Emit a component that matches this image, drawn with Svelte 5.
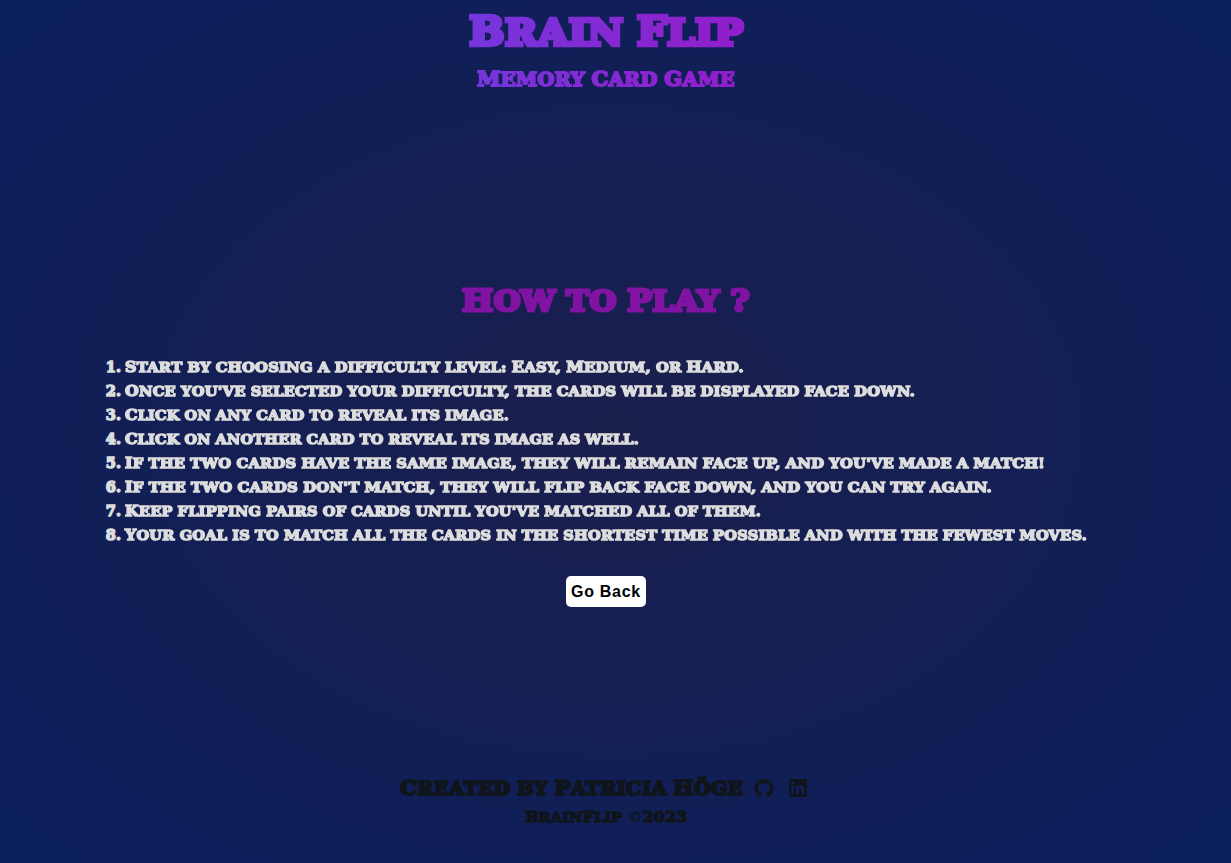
<script>
  const steps = [
    ['Start by choosing a difficulty level: Easy, Medium, or Hard.', 619],
    ["Once you've selected your difficulty, the cards will be displayed face down.", 790],
    ['Click on any card to reveal its image.', 384],
    ['Click on another card to reveal its image as well.', 514],
    ['If the two cards have the same image, they will remain face up, and you\'ve made a match!', 920],
    ["If the two cards don't match, they will flip back face down, and you can try again.", 867],
    ["Keep flipping pairs of cards until you've matched all of them.", 636],
    ['Your goal is to match all the cards in the shortest time possible and with the fewest moves.', 962]
  ];

  // Capitals keep the full size, everything else is set as slightly smaller capitals.
  const runs = (text) => text.match(/©|[A-ZÖ0-9?]+|[^A-ZÖ0-9?©]+/g);

  // Widens the letters of a line so that it fills the given width.
  function stretch(node, width) {
    const natural = node.getBoundingClientRect().width;
    node.style.transform = `scaleX(${width / natural})`;
  }
</script>

{#snippet caps(text, width)}<span class="line" style="width: {width}px"><span class="caps" use:stretch={width}>{#each runs(text) as run}<span class:small={!/^[A-ZÖ0-9?©]/.test(run)} class:thin={run === '©'}>{run}</span>{/each}</span></span>{/snippet}

<div class="page">
  <header>
    <h1>{@render caps('Brain Flip', 275)}</h1>
    <h2>{@render caps('Memory Card Game', 258)}</h2>
  </header>

  <main>
    <h3>{@render caps('How to Play ?', 288)}</h3>
    <ol>
      {#each steps as [text, width], i}
        <li><span class="number">{i + 1}.</span>{@render caps(text, width)}</li>
      {/each}
    </ol>
    <button>Go Back</button>
  </main>

  <footer>
    <div class="author">
      {@render caps('Created by Patricia Höge', 343)}
      <svg class="github" viewBox="0 0 16 16"><path d="M8 0C3.58 0 0 3.58 0 8c0 3.54 2.29 6.53 5.47 7.59.4.07.55-.17.55-.38 0-.19-.01-.82-.01-1.49-2.01.37-2.53-.49-2.69-.94-.09-.23-.48-.94-.82-1.13-.28-.15-.68-.52-.01-.53.63-.01 1.08.58 1.23.82.72 1.21 1.87.87 2.33.66.07-.52.28-.87.51-1.07-1.78-.2-3.64-.89-3.64-3.95 0-.87.31-1.59.82-2.15-.08-.2-.36-1.02.08-2.12 0 0 .67-.21 2.2.82.64-.18 1.32-.27 2-.27s1.36.09 2 .27c1.53-1.04 2.2-.82 2.2-.82.44 1.1.16 1.92.08 2.12.51.56.82 1.27.82 2.15 0 3.07-1.87 3.75-3.65 3.95.29.25.54.73.54 1.48 0 1.07-.01 1.93-.01 2.2 0 .21.15.46.55.38A8.01 8.01 0 0 0 16 8c0-4.42-3.58-8-8-8z" /></svg>
      <svg class="linkedin" viewBox="0 0 18 18"><path fill-rule="evenodd" d="M.6 0h16.8a.6.6 0 0 1 .6.6v16.8a.6.6 0 0 1-.6.6H.6a.6.6 0 0 1-.6-.6V.6A.6.6 0 0 1 .6 0zM4 2.4a1.55 1.55 0 1 0 0 3.1 1.55 1.55 0 0 0 0-3.1zM2.7 6.8v8.5h2.6V6.8zM6.9 6.8v8.5h2.7v-4.2c0-1.1.3-2.1 1.6-2.1s1.4 1.2 1.4 2.2v4.1h2.7v-4.7c0-2.3-.5-4-3.2-4-1.3 0-2.1.7-2.5 1.4V6.8z" /></svg>
    </div>
    <div class="copyright">{@render caps('BrainFlip ©2023', 162)}</div>
  </footer>
</div>

<style>
  :global(body) {
    margin: 0;
  }
  .page {
    box-sizing: border-box;
    height: 863px;
    padding-right: 19px;
    display: flex;
    flex-direction: column;
    align-items: center;
    overflow: hidden;
    color: #ddd;
    font-family: 'DejaVu Serif', serif;
    font-weight: 700;
    background: radial-gradient(ellipse at center, #1b1f4c, #0b1f5e);
  }
  header,
  main,
  footer {
    display: flex;
    flex-direction: column;
    align-items: center;
  }
  header {
    height: 270px;
  }
  h1,
  h2,
  h3 {
    margin: 0;
    font-weight: 700;
  }
  .line {
    display: inline-block;
    flex: none;
    white-space: pre;
  }
  .caps {
    display: inline-block;
    transform-origin: left;
    white-space: pre;
    text-transform: uppercase;
    letter-spacing: 0.015em;
    word-spacing: -0.02em;
    -webkit-text-stroke: 0.11em currentColor;
  }
  .small {
    font-size: 0.93em;
  }
  .thin {
    font-weight: 400;
    -webkit-text-stroke-width: 0.02em;
  }
  h1 .caps,
  h2 .caps {
    color: transparent;
    -webkit-text-stroke-color: transparent;
    background: linear-gradient(to right, #7636dc, #921dca);
    background-clip: text;
    -webkit-background-clip: text;
  }
  h1 {
    height: 63px;
    font-size: 39px;
    line-height: 62px;
  }
  h2 {
    font-size: 19.5px;
    line-height: 34px;
  }
  h2 .caps {
    -webkit-text-stroke-width: 0.1em;
  }
  h2 .small {
    font-size: 0.92em;
  }
  main {
    height: 490px;
  }
  h3 {
    margin-top: 6px;
    font-size: 29px;
    line-height: 50px;
    color: #8013a1;
  }
  ol {
    width: 984px;
    margin: 28px 26px 0 0;
    padding: 0;
    list-style: none;
    font-size: 14.5px;
    line-height: 24px;
  }
  ol .caps {
    -webkit-text-stroke-width: 0.1em;
  }
  li {
    display: flex;
    height: 24px;
  }
  .number {
    flex: none;
    width: 20px;
    margin-right: 4px;
    text-align: right;
    white-space: nowrap;
    -webkit-text-stroke: 0.1em currentColor;
  }
  button {
    width: 80px;
    height: 31px;
    margin-top: 29px;
    padding: 0;
    border: 0;
    border-radius: 5px;
    background: #fff;
    color: #000;
    font: 700 16px/31px 'Liberation Sans', Arial, sans-serif;
    letter-spacing: 0.7px;
    white-space: nowrap;
  }
  footer {
    color: #10151b;
  }
  .author {
    display: flex;
    align-items: center;
    height: 56px;
    margin-right: 5px;
    font-size: 20px;
    line-height: 32px;
  }
  .author svg {
    fill: currentColor;
  }
  .github {
    width: 20px;
    height: 19px;
    margin-left: 11px;
  }
  .linkedin {
    width: 18px;
    height: 18px;
    margin-left: 15px;
  }
  .copyright {
    font-size: 14.5px;
    line-height: 24px;
    margin-top: -11px;
  }
</style>
